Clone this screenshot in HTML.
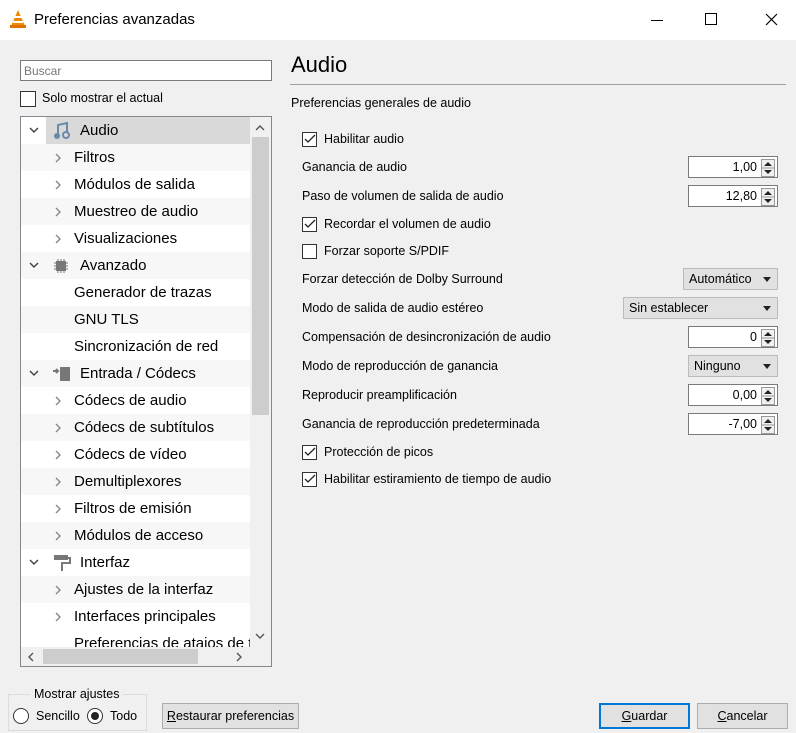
<!DOCTYPE html><html><head><style>
*{box-sizing:border-box;margin:0;padding:0}
body{width:796px;height:733px;background:#f0f0f0;font-family:"Liberation Sans",sans-serif;color:#000;position:relative;overflow:hidden}
.a{position:absolute}
.title{left:0;top:0;width:796px;height:40px;background:#fff}
.tree{left:20px;top:116px;width:252px;height:551px;border:1px solid #828790;background:#fff;overflow:hidden}
.row{position:absolute;left:0;width:230px;height:27px;font-size:15px;line-height:27px;white-space:nowrap}
.row.g{background:#f7f7f7}
.cv{position:absolute;top:8px}
.lbl{font-size:12.5px;position:absolute;left:302px}
.cb{position:absolute;width:15px;height:15px;border:1px solid #333;background:#fff}
.spin{position:absolute;left:688px;width:90px;height:22px;border:1px solid #7a7a7a;background:#fff;font-size:12.5px;line-height:20px;text-align:right;padding-right:20px}
.spin svg{position:absolute;right:2px;top:2px}
.combo{position:absolute;height:22px;border:1px solid #bbb;background:#e1e1e1;font-size:12.5px;line-height:20px;padding-left:5px}
.combo:after{content:"";position:absolute;right:6px;top:8px;border:4px solid transparent;border-top:5px solid #222}
.btn{position:absolute;height:26px;border:1px solid #adadad;background:#e1e1e1;font-size:12.5px;line-height:24px;text-align:center}
</style></head><body>
<svg width="0" height="0" style="position:absolute"><defs>
<symbol id="r" viewBox="0 0 10 12"><path d="M3 2l4 4-4 4" stroke="#888" stroke-width="1.4" fill="none"/></symbol>
<symbol id="d" viewBox="0 0 12 10"><path d="M2 3l4 4 4-4" stroke="#444" stroke-width="1.5" fill="none"/></symbol>
<symbol id="sp" viewBox="0 0 14 18"><rect x="0.5" y="0.5" width="13" height="17" fill="#f0f0f0" stroke="#999"/><line x1="1" y1="9" x2="13" y2="9" stroke="#999"/><path d="M3 7l4-4 4 4z M3 11l4 4 4-4z" fill="#222"/></symbol>
</defs></svg>
<div class="a title"></div>
<svg class="a" style="left:9px;top:9px" width="18" height="20"><polygon points="9,1 16,17 2,17" fill="#f08a00"/><rect x="5" y="7" width="8" height="2" fill="#fff"/><rect x="4" y="12" width="10" height="2" fill="#fff"/><rect x="1" y="16" width="16" height="3" fill="#e07000"/></svg>
<div class="a" style="left:34px;top:11px;font-size:15px">Preferencias avanzadas</div>
<div class="a" style="left:651px;top:20px;width:12px;height:1px;background:#000"></div>
<div class="a" style="left:705px;top:13px;width:12px;height:12px;border:1px solid #000"></div>
<svg class="a" style="left:765px;top:13px" width="13" height="13"><path d="M1 1l11 11M12 1L1 12" stroke="#000" stroke-width="1.2"/></svg>

<div class="a" style="left:20px;top:60px;width:252px;height:21px;border:1px solid #7a7a7a;background:#fff;font-size:12px;color:#777;padding:3px 3px">Buscar</div>
<div class="cb" style="left:20px;top:91px;width:16px;height:16px"></div>
<div class="a" style="left:42px;top:91px;font-size:12.5px">Solo mostrar el actual</div>

<div class="a tree">
<div class="row" style="top:0;left:25px;width:204px;background:#d9d9d9"></div>
<div class="row" style="top:0"><svg class="cv" style="left:7px" width="12" height="10"><use href="#d"/></svg><svg class="a" style="left:32px;top:4px" width="18" height="20"><path d="M5 15V4l9-2v10" stroke="#6a8aa8" stroke-width="2" fill="none"/><circle cx="4" cy="15" r="3" fill="#6a8aa8"/><circle cx="13" cy="14" r="3" fill="none" stroke="#6a8aa8" stroke-width="2"/></svg><span class="a" style="left:59px">Audio</span></div>
<div class="row g" style="top:27px"><svg class="cv" style="left:32px" width="10" height="12"><use href="#r"/></svg><span class="a" style="left:53px">Filtros</span></div>
<div class="row" style="top:54px"><svg class="cv" style="left:32px" width="10" height="12"><use href="#r"/></svg><span class="a" style="left:53px">Módulos de salida</span></div>
<div class="row g" style="top:81px"><svg class="cv" style="left:32px" width="10" height="12"><use href="#r"/></svg><span class="a" style="left:53px">Muestreo de audio</span></div>
<div class="row" style="top:108px"><svg class="cv" style="left:32px" width="10" height="12"><use href="#r"/></svg><span class="a" style="left:53px">Visualizaciones</span></div>
<div class="row g" style="top:135px"><svg class="cv" style="left:7px" width="12" height="10"><use href="#d"/></svg><svg class="a" style="left:32px;top:6px" width="16" height="16"><rect x="3" y="3" width="10" height="10" fill="#777"/><path d="M5 1v14M8 1v14M11 1v14M1 5h14M1 8h14M1 11h14" stroke="#777"/></svg><span class="a" style="left:59px">Avanzado</span></div>
<div class="row" style="top:162px"><span class="a" style="left:53px">Generador de trazas</span></div>
<div class="row g" style="top:189px"><span class="a" style="left:53px">GNU TLS</span></div>
<div class="row" style="top:216px"><span class="a" style="left:53px">Sincronización de red</span></div>
<div class="row g" style="top:243px"><svg class="cv" style="left:7px" width="12" height="10"><use href="#d"/></svg><svg class="a" style="left:31px;top:5px" width="20" height="18"><rect x="8" y="2" width="10" height="14" fill="#777"/><path d="M1 6h5M4 4l2 2-2 2" stroke="#777" stroke-width="2" fill="none"/></svg><span class="a" style="left:59px">Entrada / Códecs</span></div>
<div class="row" style="top:270px"><svg class="cv" style="left:32px" width="10" height="12"><use href="#r"/></svg><span class="a" style="left:53px">Códecs de audio</span></div>
<div class="row g" style="top:297px"><svg class="cv" style="left:32px" width="10" height="12"><use href="#r"/></svg><span class="a" style="left:53px">Códecs de subtítulos</span></div>
<div class="row" style="top:324px"><svg class="cv" style="left:32px" width="10" height="12"><use href="#r"/></svg><span class="a" style="left:53px">Códecs de vídeo</span></div>
<div class="row g" style="top:351px"><svg class="cv" style="left:32px" width="10" height="12"><use href="#r"/></svg><span class="a" style="left:53px">Demultiplexores</span></div>
<div class="row" style="top:378px"><svg class="cv" style="left:32px" width="10" height="12"><use href="#r"/></svg><span class="a" style="left:53px">Filtros de emisión</span></div>
<div class="row g" style="top:405px"><svg class="cv" style="left:32px" width="10" height="12"><use href="#r"/></svg><span class="a" style="left:53px">Módulos de acceso</span></div>
<div class="row" style="top:432px"><svg class="cv" style="left:7px" width="12" height="10"><use href="#d"/></svg><svg class="a" style="left:32px;top:5px" width="18" height="18"><rect x="1" y="1" width="14" height="5" fill="#777"/><path d="M15 4h2v5H9v8" stroke="#777" stroke-width="2" fill="none"/></svg><span class="a" style="left:59px">Interfaz</span></div>
<div class="row g" style="top:459px"><svg class="cv" style="left:32px" width="10" height="12"><use href="#r"/></svg><span class="a" style="left:53px">Ajustes de la interfaz</span></div>
<div class="row" style="top:486px"><svg class="cv" style="left:32px" width="10" height="12"><use href="#r"/></svg><span class="a" style="left:53px">Interfaces principales</span></div>
<div class="row" style="top:513px;height:17px;overflow:hidden"><span class="a" style="left:53px">Preferencias de atajos de t</span></div>
<div class="a" style="left:229px;top:0;width:21px;height:530px;background:#f0f0f0"></div>
<div class="a" style="left:231px;top:20px;width:17px;height:278px;background:#cdcdcd"></div>
<svg class="a" style="left:233px;top:6px" width="12" height="10"><path d="M2 7l4-4 4 4" stroke="#555" stroke-width="1.4" fill="none"/></svg>
<svg class="a" style="left:233px;top:514px" width="12" height="10"><path d="M2 3l4 4 4-4" stroke="#555" stroke-width="1.4" fill="none"/></svg>
<div class="a" style="left:0;top:530px;width:250px;height:19px;background:#f0f0f0"></div>
<div class="a" style="left:22px;top:532px;width:155px;height:15px;background:#cdcdcd"></div>
<svg class="a" style="left:5px;top:534px" width="10" height="12"><path d="M7 2L3 6l4 4" stroke="#555" stroke-width="1.4" fill="none"/></svg>
<svg class="a" style="left:213px;top:534px" width="10" height="12"><path d="M3 2l4 4-4 4" stroke="#555" stroke-width="1.4" fill="none"/></svg>
</div>

<div class="a" style="left:291px;top:52px;font-size:22px">Audio</div>
<div class="a" style="left:290px;top:84px;width:496px;height:1px;background:#a0a0a0"></div>
<div class="a" style="left:291px;top:96px;font-size:12.5px">Preferencias generales de audio</div>

<div class="cb" style="left:302px;top:132px"></div><div class="lbl" style="left:324px;top:132px">Habilitar audio</div>
<div class="lbl" style="top:160px">Ganancia de audio</div><div class="spin" style="top:156px">1,00<svg width="14" height="18"><use href="#sp"/></svg></div>
<div class="lbl" style="top:189px">Paso de volumen de salida de audio</div><div class="spin" style="top:185px">12,80<svg width="14" height="18"><use href="#sp"/></svg></div>
<div class="cb" style="left:302px;top:217px"></div><div class="lbl" style="left:324px;top:217px">Recordar el volumen de audio</div>
<div class="cb" style="left:302px;top:244px"></div><div class="lbl" style="left:324px;top:244px">Forzar soporte S/PDIF</div>
<div class="lbl" style="top:272px">Forzar detección de Dolby Surround</div><div class="combo" style="left:683px;top:268px;width:95px">Automático</div>
<div class="lbl" style="top:301px">Modo de salida de audio estéreo</div><div class="combo" style="left:623px;top:297px;width:155px">Sin establecer</div>
<div class="lbl" style="top:330px">Compensación de desincronización de audio</div><div class="spin" style="top:326px">0<svg width="14" height="18"><use href="#sp"/></svg></div>
<div class="lbl" style="top:359px">Modo de reproducción de ganancia</div><div class="combo" style="left:688px;top:355px;width:90px">Ninguno</div>
<div class="lbl" style="top:388px">Reproducir preamplificación</div><div class="spin" style="top:384px">0,00<svg width="14" height="18"><use href="#sp"/></svg></div>
<div class="lbl" style="top:417px">Ganancia de reproducción predeterminada</div><div class="spin" style="top:413px">-7,00<svg width="14" height="18"><use href="#sp"/></svg></div>
<div class="cb" style="left:302px;top:445px"></div><div class="lbl" style="left:324px;top:445px">Protección de picos</div>
<div class="cb" style="left:302px;top:472px"></div><div class="lbl" style="left:324px;top:472px">Habilitar estiramiento de tiempo de audio</div>
<svg class="a" style="left:302px;top:130px" width="16" height="360"><g stroke="#222" stroke-width="1.3" fill="none"><path d="M3 9l3 3 7-7"/><path d="M3 94l3 3 7-7"/><path d="M3 322l3 3 7-7"/><path d="M3 349l3 3 7-7"/></g></svg>

<div class="a" style="left:8px;top:694px;width:139px;height:37px;border:1px solid #dcdcdc"></div>
<div class="a" style="left:30px;top:687px;background:#f0f0f0;padding:0 4px;font-size:12.5px">Mostrar ajustes</div>
<div class="a" style="left:13px;top:708px;width:16px;height:16px;border:1px solid #333;border-radius:50%;background:#fff"></div>
<div class="a" style="left:36px;top:709px;font-size:12.5px">Sencillo</div>
<div class="a" style="left:87px;top:708px;width:16px;height:16px;border:1px solid #333;border-radius:50%;background:#fff"></div>
<div class="a" style="left:91px;top:712px;width:8px;height:8px;border-radius:50%;background:#222"></div>
<div class="a" style="left:110px;top:709px;font-size:12.5px">Todo</div>
<div class="btn" style="left:162px;top:703px;width:137px"><u>R</u>estaurar preferencias</div>
<div class="btn" style="left:599px;top:703px;width:91px;border:2px solid #0078d7;line-height:22px"><u>G</u>uardar</div>
<div class="btn" style="left:697px;top:703px;width:91px"><u>C</u>ancelar</div>
</body></html>
